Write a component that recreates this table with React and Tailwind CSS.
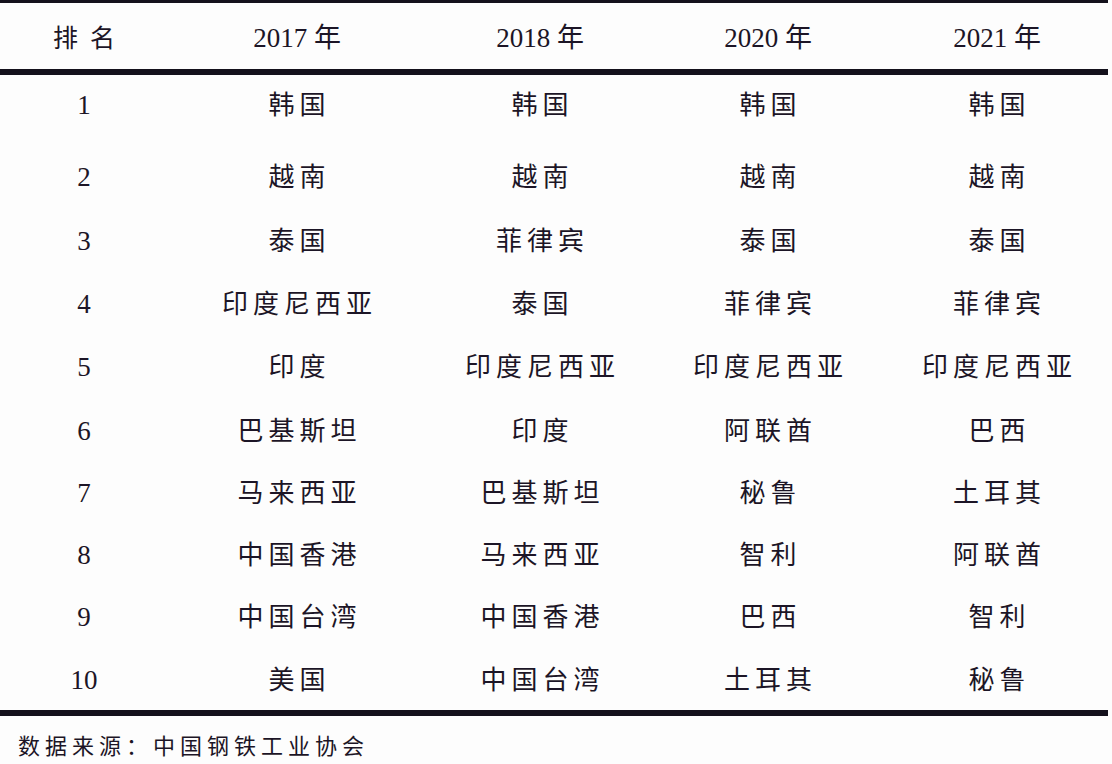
const header = ["排名", "2017 年", "2018 年", "2020 年", "2021 年"];

const rows = [
  ["1", "韩国", "韩国", "韩国", "韩国"],
  ["2", "越南", "越南", "越南", "越南"],
  ["3", "泰国", "菲律宾", "泰国", "泰国"],
  ["4", "印度尼西亚", "泰国", "菲律宾", "菲律宾"],
  ["5", "印度", "印度尼西亚", "印度尼西亚", "印度尼西亚"],
  ["6", "巴基斯坦", "印度", "阿联酋", "巴西"],
  ["7", "马来西亚", "巴基斯坦", "秘鲁", "土耳其"],
  ["8", "中国香港", "马来西亚", "智利", "阿联酋"],
  ["9", "中国台湾", "中国香港", "巴西", "智利"],
  ["10", "美国", "中国台湾", "土耳其", "秘鲁"],
];

// row heights taken from the screenshot, rows are not perfectly even
const rowHeights = [
  "h-[66px] pb-[5px]",
  "h-[68px] pt-[4px]",
  "h-[63px] pt-[1px]",
  "h-[63px] pt-[1px]",
  "h-[64px]",
  "h-[63px] pt-[1px]",
  "h-[62px]",
  "h-[62px]",
  "h-[63px]",
  "h-[61px] pt-[2px]",
];

const font = { fontFamily: '"Liberation Serif", "Noto Sans CJK SC", serif' };

function Cell({ text, first }) {
  return (
    <div className="flex items-center justify-center">
      <span className={first ? "text-[27px]" : "text-[26px] tracking-[5px] pl-[5px]"}>{text}</span>
    </div>
  );
}

export default function App() {
  return (
    <div className="w-[1112px] h-[764px] bg-[#fdfdfd] text-[#1c1526] overflow-hidden" style={font}>
      <div className="w-[1108px] border-t-[3px] border-[#14111c]" />
      <div className="grid grid-cols-[168px_258px_228px_228px_1fr] h-[66px]">
        {header.map((h, i) => (
          <div key={i} className="flex items-center justify-center pt-[5px]">
            <span className={i === 0 ? "text-[25px] tracking-[12px] pl-[12px]" : "text-[27px]"}>{h}</span>
          </div>
        ))}
      </div>
      <div className="w-[1108px] h-[6px] bg-[#14111c]" />
      {rows.map((r, ri) => (
        <div key={ri} className={`grid grid-cols-[168px_258px_228px_228px_1fr] ${rowHeights[ri]}`}>
          {r.map((c, ci) => (
            <Cell key={ci} text={c} first={ci === 0} />
          ))}
        </div>
      ))}
      <div className="w-[1108px] h-[6px] bg-[#14111c]" />
      <div className="pl-[18px] pt-[14px] text-[22px] tracking-[5px]">数据来源：中国钢铁工业协会</div>
    </div>
  );
}
